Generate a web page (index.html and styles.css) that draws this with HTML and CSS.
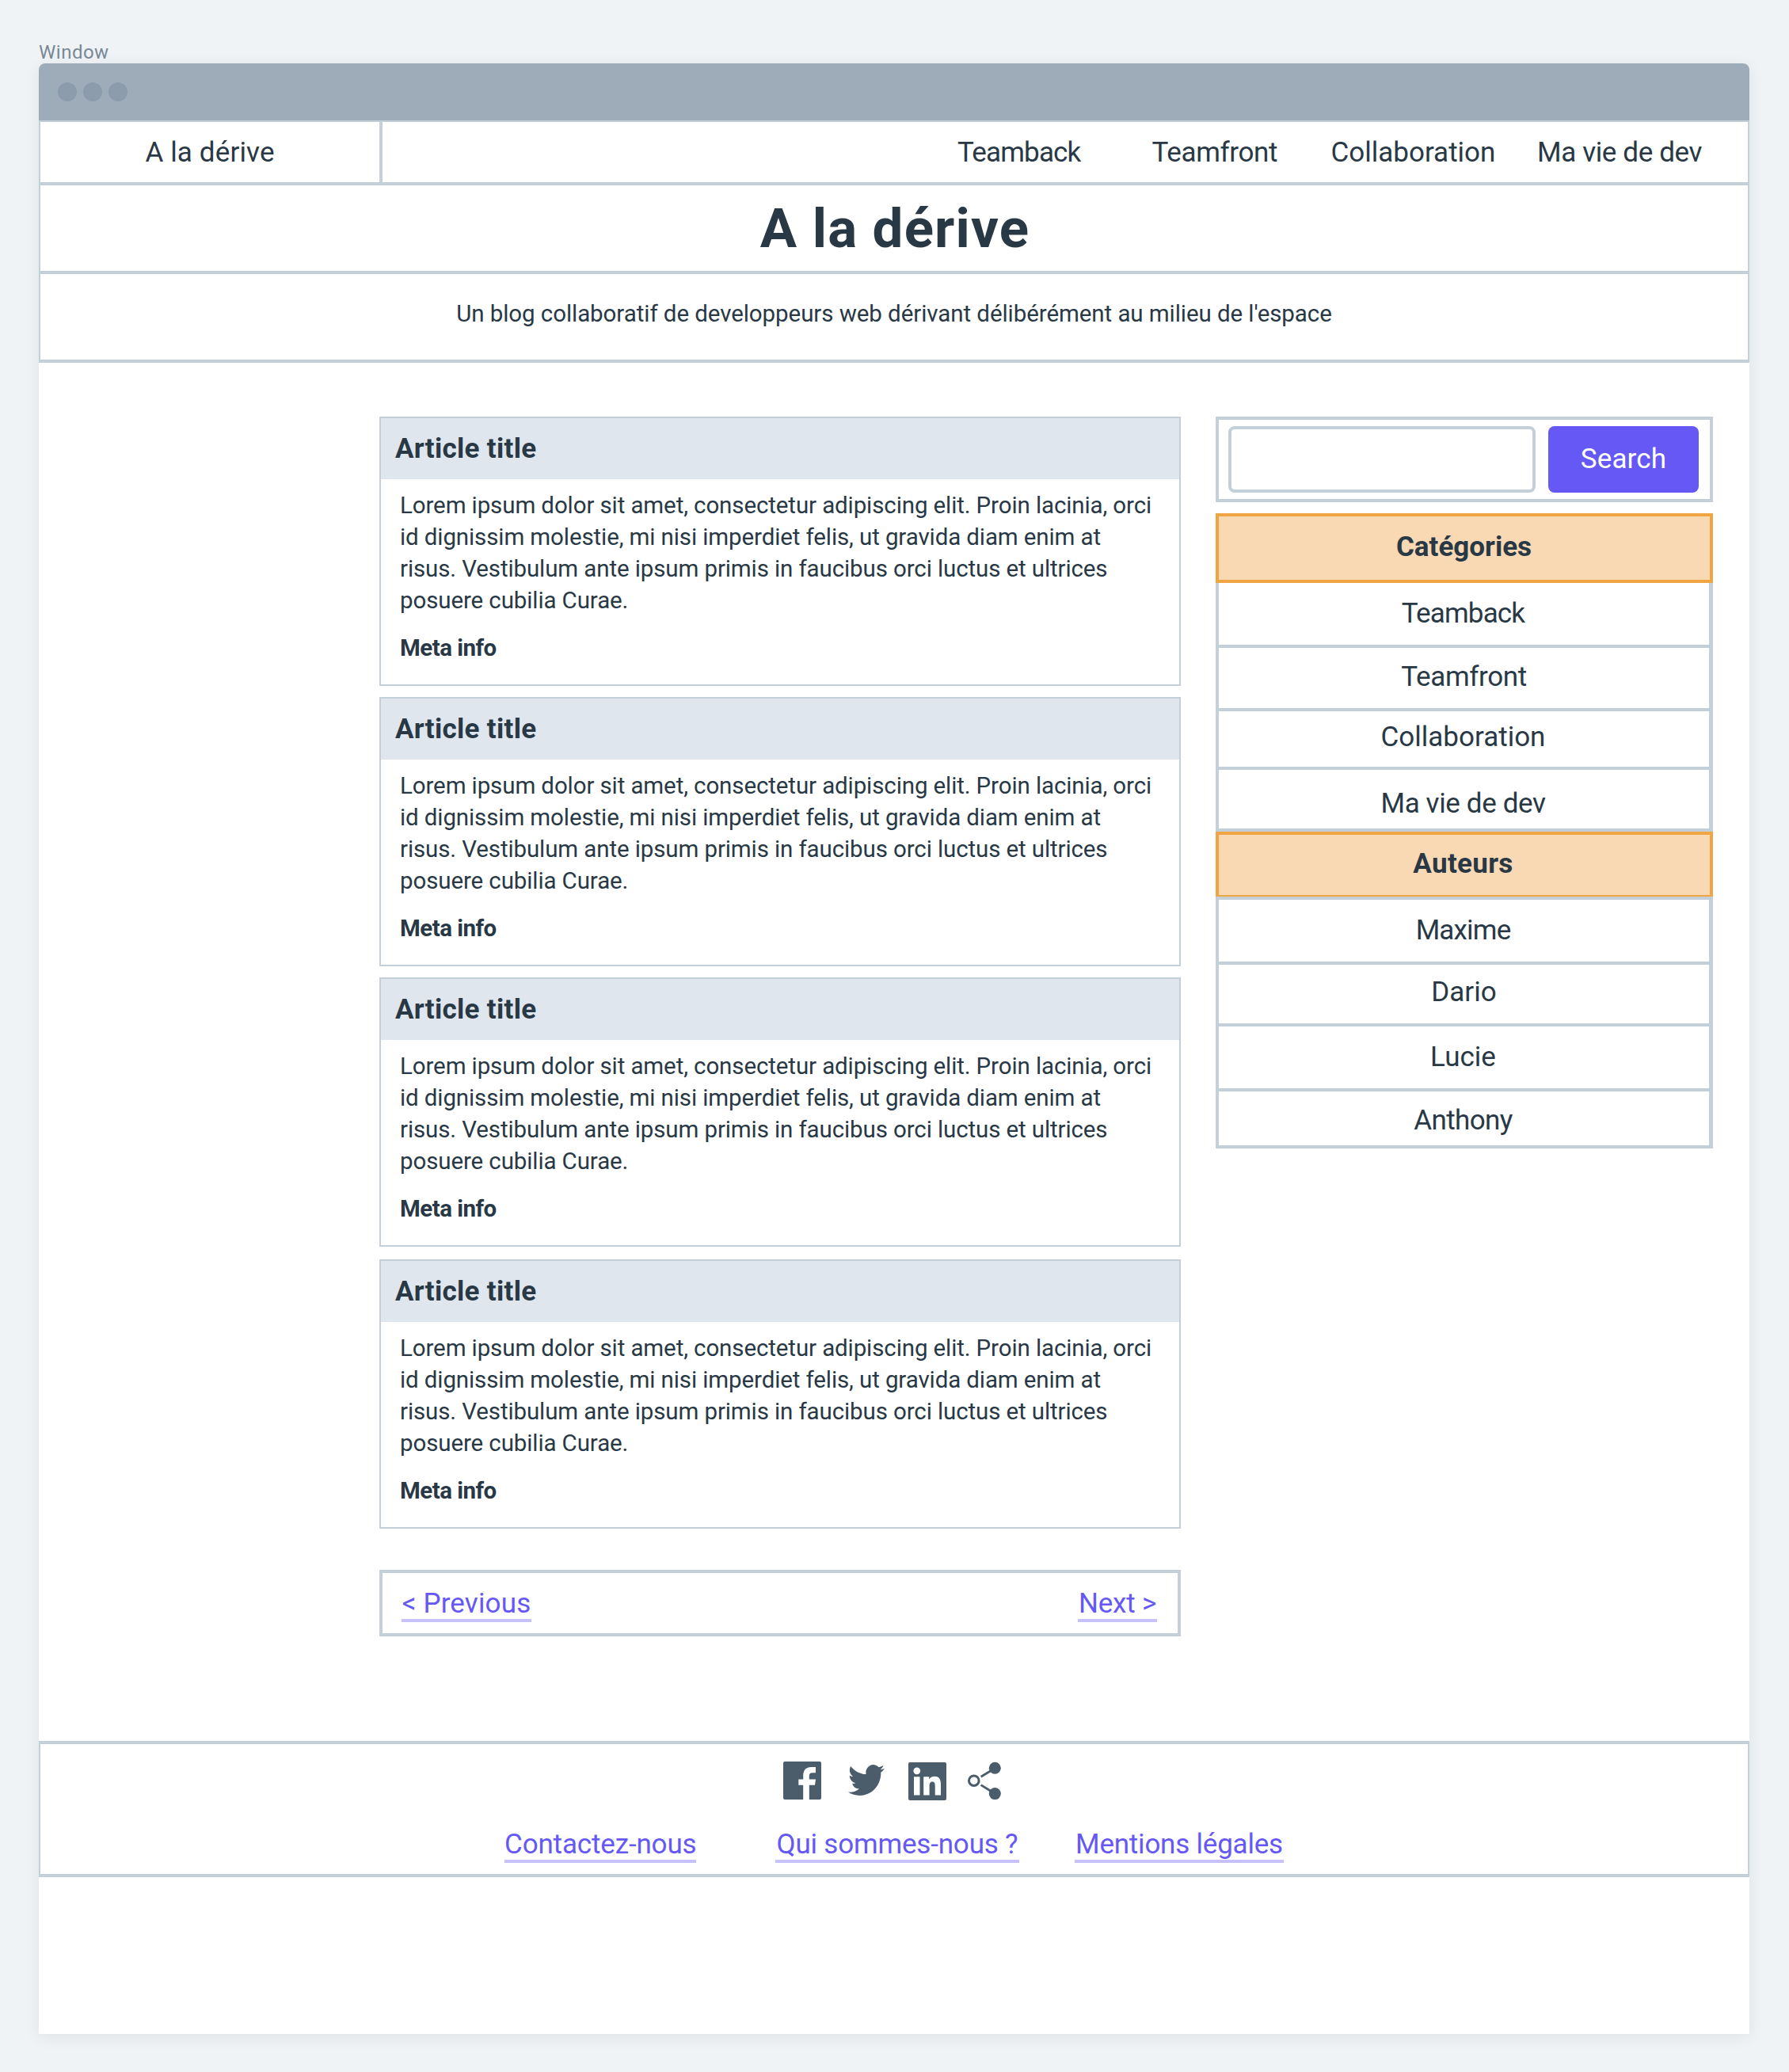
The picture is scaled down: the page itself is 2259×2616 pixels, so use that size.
FILE: index.html
```html
<!DOCTYPE html>
<html lang="fr">
<head>
<meta charset="utf-8">
<title>A la dérive</title>
<link rel="stylesheet" href="styles.css">
</head>
<body>
<div class="label">Window</div>
<div class="window">
  <div class="titlebar"><span class="dot"></span><span class="dot"></span><span class="dot"></span></div>
  <header class="topbar">
    <div class="logo">A la dérive</div>
    <nav class="nav">
      <a class="teamback">Teamback</a>
      <a class="teamfront">Teamfront</a>
      <a>Collaboration</a>
      <a class="vie">Ma vie de dev</a>
    </nav>
  </header>
  <div class="hero"><h1>A la dérive</h1></div>
  <div class="tagline">Un blog collaboratif de developpeurs web dérivant délibérément au milieu de l'espace</div>

  <div class="content">
    <main class="main">
      <article class="article">
        <h2>Article title</h2>
        <div class="article-body">
          <p>Lorem ipsum dolor sit amet, consectetur adipiscing elit. Proin lacinia, orci<br>id dignissim molestie, mi nisi imperdiet felis, ut gravida diam enim at<br>risus. Vestibulum ante ipsum primis in faucibus orci luctus et ultrices<br>posuere cubilia Curae.</p>
          <div class="meta">Meta info</div>
        </div>
      </article>
      <article class="article">
        <h2>Article title</h2>
        <div class="article-body">
          <p>Lorem ipsum dolor sit amet, consectetur adipiscing elit. Proin lacinia, orci<br>id dignissim molestie, mi nisi imperdiet felis, ut gravida diam enim at<br>risus. Vestibulum ante ipsum primis in faucibus orci luctus et ultrices<br>posuere cubilia Curae.</p>
          <div class="meta">Meta info</div>
        </div>
      </article>
      <article class="article">
        <h2>Article title</h2>
        <div class="article-body">
          <p>Lorem ipsum dolor sit amet, consectetur adipiscing elit. Proin lacinia, orci<br>id dignissim molestie, mi nisi imperdiet felis, ut gravida diam enim at<br>risus. Vestibulum ante ipsum primis in faucibus orci luctus et ultrices<br>posuere cubilia Curae.</p>
          <div class="meta">Meta info</div>
        </div>
      </article>
      <article class="article last">
        <h2>Article title</h2>
        <div class="article-body">
          <p>Lorem ipsum dolor sit amet, consectetur adipiscing elit. Proin lacinia, orci<br>id dignissim molestie, mi nisi imperdiet felis, ut gravida diam enim at<br>risus. Vestibulum ante ipsum primis in faucibus orci luctus et ultrices<br>posuere cubilia Curae.</p>
          <div class="meta">Meta info</div>
        </div>
      </article>
      <div class="pager">
        <a class="link prev">&lt; Previous</a>
        <a class="link next">Next &gt;</a>
      </div>
    </main>

    <aside class="sidebar">
      <form class="search">
        <input class="field" type="text">
        <button class="button" type="button">Search</button>
      </form>
      <h3 class="heading">Catégories</h3>
      <ul class="list">
        <li class="row-82 teamback">Teamback</li>
        <li class="row-80 teamfront">Teamfront</li>
        <li class="row-74">Collaboration</li>
        <li class="row-78 vie">Ma vie de dev</li>
      </ul>
      <h3 class="heading authors">Auteurs</h3>
      <ul class="list list-authors">
        <li class="row-82 maxime">Maxime</li>
        <li class="row-78b">Dario</li>
        <li class="row-82">Lucie</li>
        <li class="row-72 anthony">Anthony</li>
      </ul>
    </aside>
  </div>

  <footer class="footer">
    <div class="social">
      <svg class="icon-facebook" width="48" height="48" viewBox="0 0 48 48"><rect width="48" height="48" rx="2" fill="#4b5c6b"/><path fill="#fff" d="M25.2 48V29.8H19.3V22.5H25.2V17.5C25.2 10.5 29 7 35.5 7H41V14.2H37C33.8 14.2 32.8 15.5 32.8 18V22.5H41L40 29.8H32.8V48Z"/></svg>
      <svg class="icon-twitter" width="46" height="39" viewBox="0 2.2 24 19.6" preserveAspectRatio="none"><path fill="#4b5c6b" d="M23.953 4.57a10 10 0 01-2.825.775 4.958 4.958 0 002.163-2.723c-.951.555-2.005.959-3.127 1.184a4.92 4.92 0 00-8.384 4.482C7.69 8.095 4.067 6.13 1.64 3.162a4.822 4.822 0 00-.666 2.475c0 1.71.87 3.213 2.188 4.096a4.904 4.904 0 01-2.228-.616v.06a4.923 4.923 0 003.946 4.827 4.996 4.996 0 01-2.212.085 4.936 4.936 0 004.604 3.417 9.867 9.867 0 01-6.102 2.105c-.39 0-.779-.023-1.17-.067a13.995 13.995 0 007.557 2.209c9.053 0 13.998-7.496 13.998-13.985 0-.21 0-.42-.015-.63A9.935 9.935 0 0024 4.59z"/></svg>
      <svg class="icon-linkedin" width="48" height="48" viewBox="0 0 48 48"><rect width="48" height="48" rx="2" fill="#4b5c6b"/><g fill="#fff"><circle cx="10.8" cy="10.8" r="4.4"/><path d="M7 18.3h7.5v23.3H7ZM19.2 18.3h7v3.2c1.2-2.1 3.6-3.7 7-3.7 6.3 0 7.8 4.2 7.8 10.7v13.1H33.7V30.2c0-3.3-.3-5.8-3.4-5.8s-3.7 2.5-3.7 5.6v11.6h-7.4Z"/></g></svg>
      <svg class="icon-share" width="42" height="48" viewBox="0 0 42 48" fill="#4b5c6b"><circle cx="7.8" cy="24.2" r="6.3" fill="none" stroke="#4b5c6b" stroke-width="3"/><circle cx="34.3" cy="8.3" r="7.5"/><circle cx="34.3" cy="40.6" r="7.5"/><path fill="none" stroke="#4b5c6b" stroke-width="2.8" d="M16.6 19.2 29 11.7M16.6 29.6 29 37.3"/></svg>
    </div>
    <div class="footer-links">
      <a class="link contact">Contactez-nous</a>
      <a class="link about">Qui sommes-nous ?</a>
      <a class="link legal">Mentions légales</a>
    </div>
  </footer>
</div>
</body>
</html>
```
FILE: styles.css
```css
* { box-sizing: border-box; }

body {
  margin: 0;
  padding: 52px 50px 48px 49px;
  width: 2259px;
  height: 2616px;
  background: #f0f3f6;
  color: #293845;
  font: 35px/40px Roboto, "Liberation Sans", sans-serif;
}

h1, h2, h3, p, ul { margin: 0; padding: 0; }
ul { list-style: none; }

.label {
  height: 28px;
  font-size: 24px;
  line-height: 28px;
  letter-spacing: 0.5px;
  color: #788896;
}

.window {
  width: 2160px;
  height: 2488px;
  background: #fff;
  border-radius: 8px 8px 0 0;
  box-shadow: 0 4px 20px rgba(0, 0, 0, 0.07);
}

.titlebar {
  display: flex;
  align-items: center;
  gap: 8px;
  height: 72px;
  padding-left: 24px;
  background: #9eacb9;
  border-radius: 8px 8px 0 0;
}
.dot {
  width: 24px;
  height: 24px;
  border-radius: 50%;
  background: #8d9cac;
}

.topbar {
  display: flex;
  height: 82px;
  border: solid #c3cfd9;
  border-width: 2px 2px 4px;
}
.logo {
  width: 432px;
  border-right: 4px solid #c3cfd9;
  text-align: center;
  line-height: 78px;
  letter-spacing: 0.14px;
}
.nav {
  display: grid;
  grid-template-columns: 245.5px 226px 260.5px auto;
  padding-left: 726px;
  line-height: 78px;
}
.teamback { letter-spacing: -0.85px; }
.teamfront { letter-spacing: -0.37px; }
.vie { letter-spacing: -0.38px; }

.hero, .tagline {
  border: solid #c3cfd9;
  border-width: 0 2px 4px;
  height: 112px;
  text-align: center;
}
.hero h1 {
  padding-left: 2px;
  font-size: 69px;
  line-height: 110px;
  letter-spacing: 1.2px;
}
.tagline {
  font-size: 29.5px;
  line-height: 100px;
  letter-spacing: -0.07px;
}

.content {
  display: flex;
  gap: 44px;
  height: 1740px;
  padding: 68px 46px 0 430px;
}
.main { width: 1012px; }

.article {
  height: 340px;
  margin-bottom: 14px;
  border: 2px solid #c3cfd9;
}
.article:nth-of-type(3) { margin-bottom: 16px; }
.article.last { margin-bottom: 52px; }
.article h2 {
  height: 77px;
  padding-left: 18px;
  background: #dfe6ed;
  font-size: 35px;
  line-height: 78px;
  letter-spacing: 0.3px;
}
.article-body {
  padding: 13px 0 0 24px;
  font-size: 29.5px;
  letter-spacing: -0.11px;
  white-space: nowrap;
}
.meta {
  margin-top: 20px;
  font-weight: 700;
  letter-spacing: -0.53px;
}

.pager {
  display: flex;
  justify-content: space-between;
  height: 84px;
  padding: 18px 26px 0 24px;
  border: 4px solid #c3cfd9;
}
.link {
  display: block;
  height: 44px;
  border-bottom: 4px solid #c6c0fb;
  color: #6558f5;
  line-height: 42px;
  text-align: center;
  white-space: nowrap;
}
.prev { width: 164px; letter-spacing: 0.15px; }
.next { width: 100px; letter-spacing: -0.2px; }

.sidebar { width: 628px; }
.search {
  display: flex;
  gap: 16px;
  height: 108px;
  margin-bottom: 14px;
  padding: 8px 14px 8px 12px;
  border: 4px solid #c3cfd9;
}
.field {
  width: 388px;
  height: 84px;
  border: 4px solid #c3cfd9;
  border-radius: 8px;
  background: #fff;
}
.button {
  width: 190px;
  height: 84px;
  padding: 0;
  border: 0;
  border-radius: 8px;
  background: #6558f5;
  color: #fff;
  font: inherit;
  letter-spacing: 0.15px;
}

.heading {
  height: 88px;
  padding-right: 1px;
  border: 4px solid #f0a542;
  background: #f8d9b4;
  font-size: 35px;
  line-height: 78px;
  text-align: center;
}
.list {
  padding: 0;
  border: solid #c3cfd9;
  border-width: 0 5px 0 4px;
  text-align: center;
}
.list li { padding-right: 2px; border-bottom: 4px solid #c3cfd9; }
.list .teamfront, .list .row-78b { padding-right: 0; }
.row-82 { height: 82px; line-height: 78px; }
.row-80 { height: 80px; line-height: 74px; }
.row-78 { height: 78px; padding-top: 4px; line-height: 78px; }
.row-78b { height: 78px; line-height: 70px; }
.row-74 { height: 74px; line-height: 66px; }
.row-72 { height: 72px; line-height: 74px; }
.heading.authors {
  height: 82px;
  padding-right: 3px;
  border-bottom-width: 2px;
  line-height: 74px;
  letter-spacing: 0.32px;
}
.list-authors { border-top-width: 4px; }
.maxime { letter-spacing: -0.83px; }
.anthony { letter-spacing: -0.61px; }

.footer {
  height: 172px;
  border: solid #c3cfd9;
  border-width: 4px 2px;
}
.social {
  display: flex;
  align-items: flex-start;
  height: 106px;
  padding: 21.5px 0 0 938px;
}
.icon-twitter { margin: 4.5px 0 0 34px; }
.icon-linkedin { margin: 1px 0 0 30px; }
.icon-share { margin-left: 27px; }
.footer-links {
  display: flex;
  padding-left: 586px;
}
.contact { width: 242px; letter-spacing: -0.15px; }
.about { width: 308px; margin-left: 100px; letter-spacing: -0.19px; }
.legal { width: 264px; margin-left: 70px; letter-spacing: -0.22px; }
```
